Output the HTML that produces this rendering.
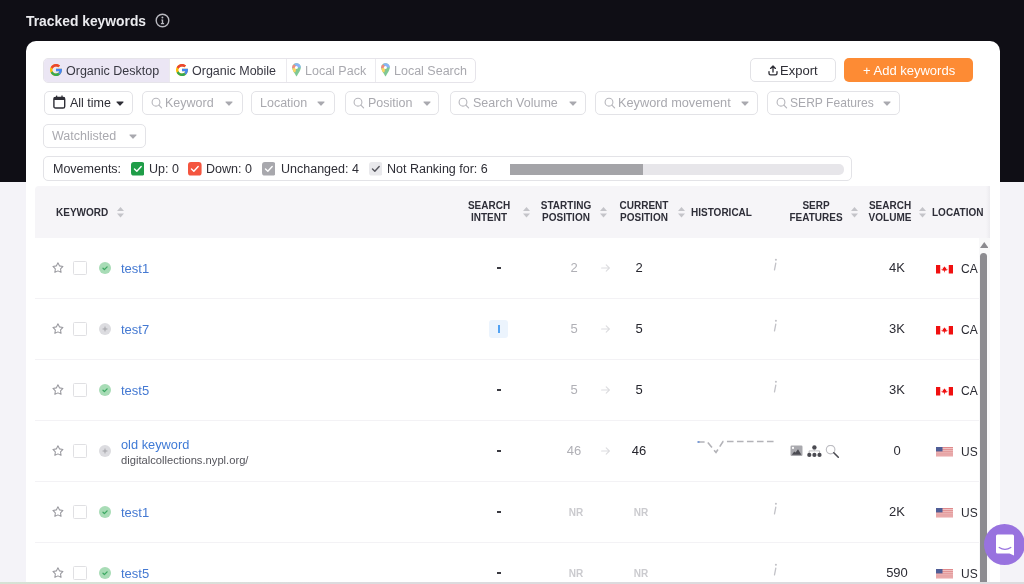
<!DOCTYPE html>
<html><head><meta charset="utf-8">
<style>
*{box-sizing:border-box;margin:0;padding:0}
html,body{width:1024px;height:584px;overflow:hidden}
body{position:relative;background:#f4f3f8;font-family:"Liberation Sans",sans-serif;color:#2b2b35}
.a{position:absolute}
.t{position:absolute;white-space:nowrap;line-height:20px;height:20px;will-change:transform}
</style></head><body>
<div class="a" style="left:0px;top:0px;width:1024px;height:182px;background:#0f0e15"></div>
<div class="a" style="left:26px;top:41px;width:974px;height:560px;background:#fff;border-radius:10px 10px 0 0"></div>
<div class="t " style="left:25.9px;top:10.7px;font-size:13.85px;color:#ebebef;font-weight:bold;">Tracked keywords</div>
<svg class="a" style="left:155px;top:13px" width="15" height="15" viewBox="0 0 15 15"><circle cx="7.5" cy="7.5" r="6.3" fill="none" stroke="#b9b9c0" stroke-width="1.4"/><circle cx="7.4" cy="4.5" r="0.95" fill="#b9b9c0"/><path d="M6.3 6.4h1.9v3.7h0.9v1.1H5.9v-1.1h0.9V7.4h-0.5z" fill="#b9b9c0"/></svg>
<div class="a" style="left:43px;top:58px;width:432.5px;height:24.5px;border:1px solid #e6e4ea;border-radius:5px"></div>
<div class="a" style="left:44px;top:59px;width:124.5px;height:22.5px;background:#ebe6f4;border-radius:4px 0 0 4px"></div>
<div class="a" style="left:168.5px;top:59px;width:1.0px;height:22.5px;background:#ebeaee"></div>
<div class="a" style="left:285.8px;top:59px;width:1.0px;height:22.5px;background:#ebeaee"></div>
<div class="a" style="left:374.8px;top:59px;width:1.0px;height:22.5px;background:#ebeaee"></div>
<svg class="a" style="left:50.2px;top:64px" width="12" height="12" viewBox="4 4 40 40"><path fill="#FBBC05" d="M43.611,20.083H42V20H24v8h11.303c-1.649,4.657-6.08,8-11.303,8c-6.627,0-12-5.373-12-12c0-6.627,5.373-12,12-12c3.059,0,5.842,1.154,7.961,3.039l5.657-5.657C34.046,6.053,29.268,4,24,4C12.955,4,4,12.955,4,24c0,11.045,8.955,20,20,20c11.045,0,20-8.955,20-20C44,22.659,43.862,21.350,43.611,20.083z"/><path fill="#EA4335" d="M6.306,14.691l6.571,4.819C14.655,15.108,18.961,12,24,12c3.059,0,5.842,1.154,7.961,3.039l5.657-5.657C34.046,6.053,29.268,4,24,4C16.318,4,9.656,8.337,6.306,14.691z"/><path fill="#34A853" d="M24,44c5.166,0,9.86-1.977,13.409-5.192l-6.19-5.238C29.211,35.091,26.715,36,24,36c-5.202,0-9.619-3.317-11.283-7.946l-6.522,5.025C9.505,39.556,16.227,44,24,44z"/><path fill="#4285F4" d="M43.611,20.083H42V20H24v8h11.303c-0.792,2.237-2.231,4.166-4.087,5.571l6.19,5.238C36.971,39.205,44,34,44,24C44,22.659,43.862,21.35,43.611,20.083z"/></svg>
<div class="t " style="left:66.2px;top:60.7px;font-size:12.5px;color:#383842;font-weight:normal;">Organic Desktop</div>
<svg class="a" style="left:175.7px;top:64px" width="12" height="12" viewBox="4 4 40 40"><path fill="#FBBC05" d="M43.611,20.083H42V20H24v8h11.303c-1.649,4.657-6.08,8-11.303,8c-6.627,0-12-5.373-12-12c0-6.627,5.373-12,12-12c3.059,0,5.842,1.154,7.961,3.039l5.657-5.657C34.046,6.053,29.268,4,24,4C12.955,4,4,12.955,4,24c0,11.045,8.955,20,20,20c11.045,0,20-8.955,20-20C44,22.659,43.862,21.350,43.611,20.083z"/><path fill="#EA4335" d="M6.306,14.691l6.571,4.819C14.655,15.108,18.961,12,24,12c3.059,0,5.842,1.154,7.961,3.039l5.657-5.657C34.046,6.053,29.268,4,24,4C16.318,4,9.656,8.337,6.306,14.691z"/><path fill="#34A853" d="M24,44c5.166,0,9.86-1.977,13.409-5.192l-6.19-5.238C29.211,35.091,26.715,36,24,36c-5.202,0-9.619-3.317-11.283-7.946l-6.522,5.025C9.505,39.556,16.227,44,24,44z"/><path fill="#4285F4" d="M43.611,20.083H42V20H24v8h11.303c-0.792,2.237-2.231,4.166-4.087,5.571l6.19,5.238C36.971,39.205,44,34,44,24C44,22.659,43.862,21.35,43.611,20.083z"/></svg>
<div class="t " style="left:191.6px;top:60.7px;font-size:12.5px;color:#383842;font-weight:normal;">Organic Mobile</div>
<svg class="a" style="left:292px;top:63px;opacity:.62" width="9" height="14" viewBox="0 0 9 14"><defs><clipPath id="pc1"><path d="M4.5 0.2C2.1 0.2 0.2 2.1 0.2 4.5c0 3 4.3 8.9 4.3 8.9s4.3-5.9 4.3-8.9C8.8 2.1 6.9 0.2 4.5 0.2z"/></clipPath></defs><g clip-path="url(#pc1)"><rect x="0" y="0" width="9" height="14" fill="#34A853"/><polygon points="1.2,0 9,0 9,4.4 5.6,4.4 3,1.9" fill="#4285F4"/><polygon points="0,1.2 3,1.9 4.4,4.4 0,5.6" fill="#EA4335"/><polygon points="0,5.6 4.4,4.4 3.4,9.2 0,9.2" fill="#FBBC04"/></g><circle cx="4.4" cy="4.4" r="1.5" fill="#fff"/></svg>
<div class="t " style="left:305px;top:60.7px;font-size:12.5px;color:#a9a9af;font-weight:normal;">Local Pack</div>
<svg class="a" style="left:381px;top:63px;opacity:.62" width="9" height="14" viewBox="0 0 9 14"><defs><clipPath id="pc2"><path d="M4.5 0.2C2.1 0.2 0.2 2.1 0.2 4.5c0 3 4.3 8.9 4.3 8.9s4.3-5.9 4.3-8.9C8.8 2.1 6.9 0.2 4.5 0.2z"/></clipPath></defs><g clip-path="url(#pc2)"><rect x="0" y="0" width="9" height="14" fill="#34A853"/><polygon points="1.2,0 9,0 9,4.4 5.6,4.4 3,1.9" fill="#4285F4"/><polygon points="0,1.2 3,1.9 4.4,4.4 0,5.6" fill="#EA4335"/><polygon points="0,5.6 4.4,4.4 3.4,9.2 0,9.2" fill="#FBBC04"/></g><circle cx="4.4" cy="4.4" r="1.5" fill="#fff"/></svg>
<div class="t " style="left:393.9px;top:60.7px;font-size:12.5px;color:#a9a9af;font-weight:normal;">Local Search</div>
<div class="a" style="left:750.2px;top:58.3px;width:85.79999999999995px;height:24.10000000000001px;border:1px solid #e2e2e6;border-radius:5px;background:#fff"></div>
<svg class="a" style="left:767.6px;top:65.4px" width="11" height="11" viewBox="0 0 11 11"><path d="M5 7V1M2.6 3.4 5 1 7.4 3.4" fill="none" stroke="#2e2e36" stroke-width="1.35" stroke-linecap="round" stroke-linejoin="round"/><path d="M1 6.6v1.6a1.6 1.6 0 0 0 1.6 1.6h4.8a1.6 1.6 0 0 0 1.6-1.6V6.6" fill="none" stroke="#2e2e36" stroke-width="1.35" stroke-linecap="round"/></svg>
<div class="t " style="left:780.2px;top:60.7px;font-size:13px;color:#2e2e36;font-weight:normal;">Export</div>
<div class="a" style="left:843.9px;top:58.3px;width:128.89999999999998px;height:24.0px;background:#fd8b34;border-radius:5px"></div>
<div class="t " style="left:862.8px;top:61.099999999999994px;font-size:13px;color:#ffffff;font-weight:normal;">+ Add keywords</div>
<div class="a" style="left:43.7px;top:91px;width:88.99999999999999px;height:23.700000000000003px;border:1px solid #e3e3e7;border-radius:5px"></div>
<svg class="a" style="left:52.8px;top:95px" width="13" height="14" viewBox="0 0 13 14"><rect x="0.9" y="2.4" width="10.8" height="10.6" rx="1.6" fill="none" stroke="#2e2e36" stroke-width="1.4"/><rect x="0.9" y="2.4" width="10.8" height="2.6" fill="#2e2e36"/><line x1="3.6" y1="0.6" x2="3.6" y2="3" stroke="#2e2e36" stroke-width="1.3"/><line x1="9" y1="0.6" x2="9" y2="3" stroke="#2e2e36" stroke-width="1.3"/></svg>
<div class="t " style="left:70.4px;top:93.3px;font-size:12.5px;color:#2e2e36;font-weight:normal;">All time</div>
<svg class="a" style="left:115.89999999999999px;top:101.3px" width="8" height="5" viewBox="0 0 8 5"><path d="M0.9 0.4h6.2a0.5 0.5 0 0 1 0.4 0.8L4.4 4.6a0.5 0.5 0 0 1-0.8 0L0.5 1.2a0.5 0.5 0 0 1 0.4-0.8z" fill="#2e2e36"/></svg>
<div class="a" style="left:141.5px;top:91px;width:101.1px;height:23.700000000000003px;border:1px solid #e3e3e7;border-radius:5px"></div>
<svg class="a" style="left:150.7px;top:97px" width="12" height="12" viewBox="0 0 12 12"><circle cx="5" cy="5.2" r="3.9" fill="none" stroke="#b6b6bc" stroke-width="1.1"/><line x1="7.9" y1="8.1" x2="10.6" y2="10.8" stroke="#b6b6bc" stroke-width="1.2" stroke-linecap="round"/></svg>
<div class="t " style="left:165.1px;top:93.3px;font-size:12.5px;color:#a9a9af;font-weight:normal;">Keyword</div>
<svg class="a" style="left:225.2px;top:101.3px" width="8" height="5" viewBox="0 0 8 5"><path d="M0.9 0.4h6.2a0.5 0.5 0 0 1 0.4 0.8L4.4 4.6a0.5 0.5 0 0 1-0.8 0L0.5 1.2a0.5 0.5 0 0 1 0.4-0.8z" fill="#a9a9af"/></svg>
<div class="a" style="left:251.2px;top:91px;width:83.60000000000002px;height:23.700000000000003px;border:1px solid #e3e3e7;border-radius:5px"></div>
<div class="t " style="left:260px;top:93.3px;font-size:12.5px;color:#a9a9af;font-weight:normal;">Location</div>
<svg class="a" style="left:317.40000000000003px;top:101.3px" width="8" height="5" viewBox="0 0 8 5"><path d="M0.9 0.4h6.2a0.5 0.5 0 0 1 0.4 0.8L4.4 4.6a0.5 0.5 0 0 1-0.8 0L0.5 1.2a0.5 0.5 0 0 1 0.4-0.8z" fill="#a9a9af"/></svg>
<div class="a" style="left:344.5px;top:91px;width:94.89999999999998px;height:23.700000000000003px;border:1px solid #e3e3e7;border-radius:5px"></div>
<svg class="a" style="left:353.3px;top:97px" width="12" height="12" viewBox="0 0 12 12"><circle cx="5" cy="5.2" r="3.9" fill="none" stroke="#b6b6bc" stroke-width="1.1"/><line x1="7.9" y1="8.1" x2="10.6" y2="10.8" stroke="#b6b6bc" stroke-width="1.2" stroke-linecap="round"/></svg>
<div class="t " style="left:367.6px;top:93.3px;font-size:12.5px;color:#a9a9af;font-weight:normal;">Position</div>
<svg class="a" style="left:423.0px;top:101.3px" width="8" height="5" viewBox="0 0 8 5"><path d="M0.9 0.4h6.2a0.5 0.5 0 0 1 0.4 0.8L4.4 4.6a0.5 0.5 0 0 1-0.8 0L0.5 1.2a0.5 0.5 0 0 1 0.4-0.8z" fill="#a9a9af"/></svg>
<div class="a" style="left:449.7px;top:91px;width:135.90000000000003px;height:23.700000000000003px;border:1px solid #e3e3e7;border-radius:5px"></div>
<svg class="a" style="left:458px;top:97px" width="12" height="12" viewBox="0 0 12 12"><circle cx="5" cy="5.2" r="3.9" fill="none" stroke="#b6b6bc" stroke-width="1.1"/><line x1="7.9" y1="8.1" x2="10.6" y2="10.8" stroke="#b6b6bc" stroke-width="1.2" stroke-linecap="round"/></svg>
<div class="t " style="left:472.6px;top:93.3px;font-size:12.5px;color:#a9a9af;font-weight:normal;">Search Volume</div>
<svg class="a" style="left:569.0px;top:101.3px" width="8" height="5" viewBox="0 0 8 5"><path d="M0.9 0.4h6.2a0.5 0.5 0 0 1 0.4 0.8L4.4 4.6a0.5 0.5 0 0 1-0.8 0L0.5 1.2a0.5 0.5 0 0 1 0.4-0.8z" fill="#a9a9af"/></svg>
<div class="a" style="left:595px;top:91px;width:162.5px;height:23.700000000000003px;border:1px solid #e3e3e7;border-radius:5px"></div>
<svg class="a" style="left:603.7px;top:97px" width="12" height="12" viewBox="0 0 12 12"><circle cx="5" cy="5.2" r="3.9" fill="none" stroke="#b6b6bc" stroke-width="1.1"/><line x1="7.9" y1="8.1" x2="10.6" y2="10.8" stroke="#b6b6bc" stroke-width="1.2" stroke-linecap="round"/></svg>
<div class="t " style="left:618px;top:93.3px;font-size:12.75px;color:#a9a9af;font-weight:normal;">Keyword movement</div>
<svg class="a" style="left:740.6px;top:101.3px" width="8" height="5" viewBox="0 0 8 5"><path d="M0.9 0.4h6.2a0.5 0.5 0 0 1 0.4 0.8L4.4 4.6a0.5 0.5 0 0 1-0.8 0L0.5 1.2a0.5 0.5 0 0 1 0.4-0.8z" fill="#a9a9af"/></svg>
<div class="a" style="left:767.3px;top:91px;width:132.80000000000007px;height:23.700000000000003px;border:1px solid #e3e3e7;border-radius:5px"></div>
<svg class="a" style="left:775.5px;top:97px" width="12" height="12" viewBox="0 0 12 12"><circle cx="5" cy="5.2" r="3.9" fill="none" stroke="#b6b6bc" stroke-width="1.1"/><line x1="7.9" y1="8.1" x2="10.6" y2="10.8" stroke="#b6b6bc" stroke-width="1.2" stroke-linecap="round"/></svg>
<div class="t " style="left:790.3px;top:93.3px;font-size:12.1px;color:#a9a9af;font-weight:normal;">SERP Features</div>
<svg class="a" style="left:883.3000000000001px;top:101.3px" width="8" height="5" viewBox="0 0 8 5"><path d="M0.9 0.4h6.2a0.5 0.5 0 0 1 0.4 0.8L4.4 4.6a0.5 0.5 0 0 1-0.8 0L0.5 1.2a0.5 0.5 0 0 1 0.4-0.8z" fill="#a9a9af"/></svg>
<div class="a" style="left:43.1px;top:124.1px;width:102.5px;height:23.599999999999994px;border:1px solid #e3e3e7;border-radius:5px"></div>
<div class="t " style="left:52.3px;top:125.9px;font-size:12.5px;color:#a9a9af;font-weight:normal;">Watchlisted</div>
<svg class="a" style="left:128.79999999999998px;top:133.9px" width="8" height="5" viewBox="0 0 8 5"><path d="M0.9 0.4h6.2a0.5 0.5 0 0 1 0.4 0.8L4.4 4.6a0.5 0.5 0 0 1-0.8 0L0.5 1.2a0.5 0.5 0 0 1 0.4-0.8z" fill="#a9a9af"/></svg>
<div class="a" style="left:43.1px;top:156.3px;width:808.5px;height:24.69999999999999px;border:1px solid #e3e3e7;border-radius:5px"></div>
<div class="t " style="left:52.9px;top:159.1px;font-size:12.5px;color:#2e2e36;font-weight:normal;">Movements:</div>
<svg class="a" style="left:130.9px;top:162px" width="13.6" height="13.6" viewBox="0 0 14 14"><rect x="0" y="0" width="14" height="14" rx="3" fill="#1f9d48"/><path d="M3.6 7.3 6 9.5 10.5 4.7" fill="none" stroke="#fff" stroke-width="1.45" stroke-linecap="round" stroke-linejoin="round"/></svg>
<div class="t " style="left:148.9px;top:159.1px;font-size:12.5px;color:#2e2e36;font-weight:normal;">Up: 0</div>
<svg class="a" style="left:188px;top:162px" width="13.6" height="13.6" viewBox="0 0 14 14"><rect x="0" y="0" width="14" height="14" rx="3" fill="#f4553f"/><path d="M3.6 7.3 6 9.5 10.5 4.7" fill="none" stroke="#fff" stroke-width="1.45" stroke-linecap="round" stroke-linejoin="round"/></svg>
<div class="t " style="left:206.4px;top:159.1px;font-size:12.5px;color:#2e2e36;font-weight:normal;">Down: 0</div>
<svg class="a" style="left:261.5px;top:162px" width="13.6" height="13.6" viewBox="0 0 14 14"><rect x="0" y="0" width="14" height="14" rx="3" fill="#a8a8ad"/><path d="M3.6 7.3 6 9.5 10.5 4.7" fill="none" stroke="#fff" stroke-width="1.45" stroke-linecap="round" stroke-linejoin="round"/></svg>
<div class="t " style="left:280.5px;top:159.1px;font-size:12.5px;color:#2e2e36;font-weight:normal;">Unchanged: 4</div>
<svg class="a" style="left:368.9px;top:162px" width="13.6" height="13.6" viewBox="0 0 14 14"><rect x="0" y="0" width="14" height="14" rx="3" fill="#e9e9ec"/><path d="M3.6 7.3 6 9.5 10.5 4.7" fill="none" stroke="#55555c" stroke-width="1.45" stroke-linecap="round" stroke-linejoin="round"/></svg>
<div class="t " style="left:386.8px;top:159.1px;font-size:12.5px;color:#2e2e36;font-weight:normal;">Not Ranking for: 6</div>
<div class="a" style="left:509.8px;top:164px;width:334.09999999999997px;height:10.599999999999994px;background:#e7e6ea;border-radius:0 5px 5px 0"></div>
<div class="a" style="left:509.8px;top:164px;width:133.7px;height:10.599999999999994px;background:#a4a4a8"></div>
<div class="a" style="left:35px;top:186px;width:955px;height:52px;background:#f6f5f8;border-radius:4px 0 0 0"></div>
<div class="a" style="left:986px;top:186px;width:4px;height:52px;background:linear-gradient(to right,#f6f5f8,#ecebef)"></div>
<div class="t " style="left:56.2px;top:202.5px;font-size:10px;color:#2e2e38;font-weight:bold;">KEYWORD</div>
<svg class="a" style="left:117.2px;top:207.0px" width="7" height="11" viewBox="0 0 7 11"><polygon points="3.5,0 7,4 0,4" fill="#c4c4c9"/><polygon points="0,6.5 7,6.5 3.5,10.5" fill="#c4c4c9"/></svg>
<div class="t" style="left:388.5px;width:200px;text-align:center;top:196.1px;font-size:10px;color:#2e2e38;font-weight:bold;">SEARCH</div>
<div class="t" style="left:388.5px;width:200px;text-align:center;top:208.1px;font-size:10px;color:#2e2e38;font-weight:bold;">INTENT</div>
<svg class="a" style="left:523px;top:207.0px" width="7" height="11" viewBox="0 0 7 11"><polygon points="3.5,0 7,4 0,4" fill="#c4c4c9"/><polygon points="0,6.5 7,6.5 3.5,10.5" fill="#c4c4c9"/></svg>
<div class="t" style="left:466.29999999999995px;width:200px;text-align:center;top:196.1px;font-size:10px;color:#2e2e38;font-weight:bold;">STARTING</div>
<div class="t" style="left:466.29999999999995px;width:200px;text-align:center;top:208.1px;font-size:10px;color:#2e2e38;font-weight:bold;">POSITION</div>
<svg class="a" style="left:600.3px;top:207.0px" width="7" height="11" viewBox="0 0 7 11"><polygon points="3.5,0 7,4 0,4" fill="#c4c4c9"/><polygon points="0,6.5 7,6.5 3.5,10.5" fill="#c4c4c9"/></svg>
<div class="t" style="left:543.8px;width:200px;text-align:center;top:196.1px;font-size:10px;color:#2e2e38;font-weight:bold;">CURRENT</div>
<div class="t" style="left:543.8px;width:200px;text-align:center;top:208.1px;font-size:10px;color:#2e2e38;font-weight:bold;">POSITION</div>
<svg class="a" style="left:678px;top:207.0px" width="7" height="11" viewBox="0 0 7 11"><polygon points="3.5,0 7,4 0,4" fill="#c4c4c9"/><polygon points="0,6.5 7,6.5 3.5,10.5" fill="#c4c4c9"/></svg>
<div class="t " style="left:690.5px;top:202.5px;font-size:10px;color:#2e2e38;font-weight:bold;">HISTORICAL</div>
<div class="t" style="left:716px;width:200px;text-align:center;top:196.1px;font-size:10px;color:#2e2e38;font-weight:bold;">SERP</div>
<div class="t" style="left:716px;width:200px;text-align:center;top:208.1px;font-size:10px;color:#2e2e38;font-weight:bold;">FEATURES</div>
<svg class="a" style="left:850.5px;top:207.0px" width="7" height="11" viewBox="0 0 7 11"><polygon points="3.5,0 7,4 0,4" fill="#c4c4c9"/><polygon points="0,6.5 7,6.5 3.5,10.5" fill="#c4c4c9"/></svg>
<div class="t" style="left:789.5px;width:200px;text-align:center;top:196.1px;font-size:10px;color:#2e2e38;font-weight:bold;">SEARCH</div>
<div class="t" style="left:789.5px;width:200px;text-align:center;top:208.1px;font-size:10px;color:#2e2e38;font-weight:bold;">VOLUME</div>
<svg class="a" style="left:918.6px;top:207.0px" width="7" height="11" viewBox="0 0 7 11"><polygon points="3.5,0 7,4 0,4" fill="#c4c4c9"/><polygon points="0,6.5 7,6.5 3.5,10.5" fill="#c4c4c9"/></svg>
<div class="t " style="left:931.7px;top:202.5px;font-size:10px;color:#2e2e38;font-weight:bold;">LOCATION</div>
<div class="a" style="left:35px;top:298px;width:944px;height:1px;background:#f3f2f5"></div>
<svg class="a" style="left:51.5px;top:262px" width="12" height="12" viewBox="0 0 12 12"><path d="M5.95 0.85 L7.57 3.88 L10.94 4.48 L8.57 6.95 L9.04 10.35 L5.95 8.85 L2.86 10.35 L3.33 6.95 L0.96 4.48 L4.33 3.88z" fill="none" stroke="#98989e" stroke-width="1.05" stroke-linejoin="round"/></svg>
<div class="a" style="left:73px;top:261px;width:14px;height:14px;border:1px solid #e0e0e3;border-radius:1.5px"></div>
<svg class="a" style="left:99.4px;top:262px" width="12" height="12" viewBox="0 0 12 12"><circle cx="6" cy="6" r="6" fill="#a8dcb6"/><path d="M4 6.3 5.4 7.6 8.1 4.9" fill="none" stroke="#3da862" stroke-width="1.3" stroke-linecap="round" stroke-linejoin="round"/></svg>
<div class="t " style="left:121.3px;top:258.5px;font-size:13px;color:#4479d2;font-weight:normal;">test1</div>
<div class="a" style="left:496.8px;top:267.45px;width:3.8999999999999773px;height:1.400000000000034px;background:#3a3a41"></div>
<div class="t" style="left:474.20000000000005px;width:200px;text-align:center;top:258.1px;font-size:13px;color:#b0b0b6;font-weight:normal;">2</div>
<svg class="a" style="left:601.3px;top:264px" width="10" height="8" viewBox="0 0 10 8"><path d="M0.6 4h7.8M5.2 0.9 8.4 4 5.2 7.1" fill="none" stroke="#dcdcdf" stroke-width="1.1" stroke-linecap="round" stroke-linejoin="round"/></svg>
<div class="t" style="left:538.6px;width:200px;text-align:center;top:258.1px;font-size:13px;color:#26262e;font-weight:normal;">2</div>
<svg class="a" style="left:770px;top:256px" width="10" height="16" viewBox="0 0 10 16"><circle cx="5.9" cy="3.7" r="1.05" fill="#c2c2c7"/><line x1="5.8" y1="7.2" x2="4.5" y2="13.8" stroke="#c2c2c7" stroke-width="1.3" stroke-linecap="round"/></svg>
<div class="t" style="left:797.3px;width:200px;text-align:center;top:258.4px;font-size:13px;color:#2b2b33;font-weight:normal;">4K</div>
<svg class="a" style="left:935.8px;top:265px" width="17" height="8.5" viewBox="0 0 34 17"><rect width="34" height="17" fill="#fff"/><rect width="8.5" height="17" fill="#f01010"/><rect x="25.5" width="8.5" height="17" fill="#f01010"/><path d="M17 2.5 18.6 5.5 20.6 4.8 20 8.8 23.2 7.6 22.2 10.6 17.7 11.4V14.5h-1.4v-3.1L11.8 10.6 10.8 7.6 14 8.8 13.4 4.8 15.4 5.5z" fill="#f01010"/></svg>
<div class="t " style="left:960.5px;top:258.6px;font-size:12px;color:#2b2b33;font-weight:normal;">CA</div>
<div class="a" style="left:35px;top:359px;width:944px;height:1px;background:#f3f2f5"></div>
<svg class="a" style="left:51.5px;top:323px" width="12" height="12" viewBox="0 0 12 12"><path d="M5.95 0.85 L7.57 3.88 L10.94 4.48 L8.57 6.95 L9.04 10.35 L5.95 8.85 L2.86 10.35 L3.33 6.95 L0.96 4.48 L4.33 3.88z" fill="none" stroke="#98989e" stroke-width="1.05" stroke-linejoin="round"/></svg>
<div class="a" style="left:73px;top:322px;width:14px;height:14px;border:1px solid #e0e0e3;border-radius:1.5px"></div>
<svg class="a" style="left:99.4px;top:323px" width="12" height="12" viewBox="0 0 12 12"><circle cx="6" cy="6" r="6" fill="#dcdce0"/><path d="M6 3.6v4.8M3.6 6h4.8" stroke="#a3a3a8" stroke-width="1"/></svg>
<div class="t " style="left:121.3px;top:319.5px;font-size:13px;color:#4479d2;font-weight:normal;">test7</div>
<div class="a" style="left:489.2px;top:319.5px;width:18.80000000000001px;height:18.899999999999977px;background:#ecf4fd;border-radius:3px"></div>
<div class="a" style="left:497.8px;top:325.3px;width:2.0px;height:7.300000000000011px;background:#52a2f3"></div>
<div class="t" style="left:474.20000000000005px;width:200px;text-align:center;top:319.1px;font-size:13px;color:#b0b0b6;font-weight:normal;">5</div>
<svg class="a" style="left:601.3px;top:325px" width="10" height="8" viewBox="0 0 10 8"><path d="M0.6 4h7.8M5.2 0.9 8.4 4 5.2 7.1" fill="none" stroke="#dcdcdf" stroke-width="1.1" stroke-linecap="round" stroke-linejoin="round"/></svg>
<div class="t" style="left:538.6px;width:200px;text-align:center;top:319.1px;font-size:13px;color:#26262e;font-weight:normal;">5</div>
<svg class="a" style="left:770px;top:317px" width="10" height="16" viewBox="0 0 10 16"><circle cx="5.9" cy="3.7" r="1.05" fill="#c2c2c7"/><line x1="5.8" y1="7.2" x2="4.5" y2="13.8" stroke="#c2c2c7" stroke-width="1.3" stroke-linecap="round"/></svg>
<div class="t" style="left:797.3px;width:200px;text-align:center;top:319.4px;font-size:13px;color:#2b2b33;font-weight:normal;">3K</div>
<svg class="a" style="left:935.8px;top:326px" width="17" height="8.5" viewBox="0 0 34 17"><rect width="34" height="17" fill="#fff"/><rect width="8.5" height="17" fill="#f01010"/><rect x="25.5" width="8.5" height="17" fill="#f01010"/><path d="M17 2.5 18.6 5.5 20.6 4.8 20 8.8 23.2 7.6 22.2 10.6 17.7 11.4V14.5h-1.4v-3.1L11.8 10.6 10.8 7.6 14 8.8 13.4 4.8 15.4 5.5z" fill="#f01010"/></svg>
<div class="t " style="left:960.5px;top:319.6px;font-size:12px;color:#2b2b33;font-weight:normal;">CA</div>
<div class="a" style="left:35px;top:420px;width:944px;height:1px;background:#f3f2f5"></div>
<svg class="a" style="left:51.5px;top:384px" width="12" height="12" viewBox="0 0 12 12"><path d="M5.95 0.85 L7.57 3.88 L10.94 4.48 L8.57 6.95 L9.04 10.35 L5.95 8.85 L2.86 10.35 L3.33 6.95 L0.96 4.48 L4.33 3.88z" fill="none" stroke="#98989e" stroke-width="1.05" stroke-linejoin="round"/></svg>
<div class="a" style="left:73px;top:383px;width:14px;height:14px;border:1px solid #e0e0e3;border-radius:1.5px"></div>
<svg class="a" style="left:99.4px;top:384px" width="12" height="12" viewBox="0 0 12 12"><circle cx="6" cy="6" r="6" fill="#a8dcb6"/><path d="M4 6.3 5.4 7.6 8.1 4.9" fill="none" stroke="#3da862" stroke-width="1.3" stroke-linecap="round" stroke-linejoin="round"/></svg>
<div class="t " style="left:121.3px;top:380.5px;font-size:13px;color:#4479d2;font-weight:normal;">test5</div>
<div class="a" style="left:496.8px;top:389.45px;width:3.8999999999999773px;height:1.400000000000034px;background:#3a3a41"></div>
<div class="t" style="left:474.20000000000005px;width:200px;text-align:center;top:380.1px;font-size:13px;color:#b0b0b6;font-weight:normal;">5</div>
<svg class="a" style="left:601.3px;top:386px" width="10" height="8" viewBox="0 0 10 8"><path d="M0.6 4h7.8M5.2 0.9 8.4 4 5.2 7.1" fill="none" stroke="#dcdcdf" stroke-width="1.1" stroke-linecap="round" stroke-linejoin="round"/></svg>
<div class="t" style="left:538.6px;width:200px;text-align:center;top:380.1px;font-size:13px;color:#26262e;font-weight:normal;">5</div>
<svg class="a" style="left:770px;top:378px" width="10" height="16" viewBox="0 0 10 16"><circle cx="5.9" cy="3.7" r="1.05" fill="#c2c2c7"/><line x1="5.8" y1="7.2" x2="4.5" y2="13.8" stroke="#c2c2c7" stroke-width="1.3" stroke-linecap="round"/></svg>
<div class="t" style="left:797.3px;width:200px;text-align:center;top:380.4px;font-size:13px;color:#2b2b33;font-weight:normal;">3K</div>
<svg class="a" style="left:935.8px;top:387px" width="17" height="8.5" viewBox="0 0 34 17"><rect width="34" height="17" fill="#fff"/><rect width="8.5" height="17" fill="#f01010"/><rect x="25.5" width="8.5" height="17" fill="#f01010"/><path d="M17 2.5 18.6 5.5 20.6 4.8 20 8.8 23.2 7.6 22.2 10.6 17.7 11.4V14.5h-1.4v-3.1L11.8 10.6 10.8 7.6 14 8.8 13.4 4.8 15.4 5.5z" fill="#f01010"/></svg>
<div class="t " style="left:960.5px;top:380.6px;font-size:12px;color:#2b2b33;font-weight:normal;">CA</div>
<div class="a" style="left:35px;top:481px;width:944px;height:1px;background:#f3f2f5"></div>
<svg class="a" style="left:51.5px;top:445px" width="12" height="12" viewBox="0 0 12 12"><path d="M5.95 0.85 L7.57 3.88 L10.94 4.48 L8.57 6.95 L9.04 10.35 L5.95 8.85 L2.86 10.35 L3.33 6.95 L0.96 4.48 L4.33 3.88z" fill="none" stroke="#98989e" stroke-width="1.05" stroke-linejoin="round"/></svg>
<div class="a" style="left:73px;top:444px;width:14px;height:14px;border:1px solid #e0e0e3;border-radius:1.5px"></div>
<svg class="a" style="left:99.4px;top:445px" width="12" height="12" viewBox="0 0 12 12"><circle cx="6" cy="6" r="6" fill="#dcdce0"/><path d="M6 3.6v4.8M3.6 6h4.8" stroke="#a3a3a8" stroke-width="1"/></svg>
<div class="t " style="left:121.2px;top:434.8px;font-size:12.8px;color:#3f7ad6;font-weight:normal;">old keyword</div>
<div class="t " style="left:121.4px;top:450px;font-size:11.2px;color:#55555c;font-weight:normal;">digitalcollections.nypl.org/</div>
<div class="a" style="left:496.8px;top:450.45px;width:3.8999999999999773px;height:1.400000000000034px;background:#3a3a41"></div>
<div class="t" style="left:474.20000000000005px;width:200px;text-align:center;top:441.1px;font-size:13px;color:#b0b0b6;font-weight:normal;">46</div>
<svg class="a" style="left:601.3px;top:447px" width="10" height="8" viewBox="0 0 10 8"><path d="M0.6 4h7.8M5.2 0.9 8.4 4 5.2 7.1" fill="none" stroke="#dcdcdf" stroke-width="1.1" stroke-linecap="round" stroke-linejoin="round"/></svg>
<div class="t" style="left:538.6px;width:200px;text-align:center;top:441.1px;font-size:13px;color:#26262e;font-weight:normal;">46</div>
<svg class="a" style="left:696px;top:440px" width="82" height="15" viewBox="0 0 82 15"><path d="M2 2 L11.5 2 L20 12.5 L27 1.5 L79 1.5" fill="none" stroke="#b3b3b8" stroke-width="1.6" stroke-dasharray="6.6 3.4"/><rect x="1.5" y="1" width="2" height="2" fill="#7b9bd6"/></svg>
<svg class="a" style="left:789.5px;top:444.5px" width="50" height="14" viewBox="0 0 50 14"><rect x="0.5" y="0.5" width="12" height="10.5" rx="1.2" fill="#a9a9ae"/><circle cx="3" cy="2.9" r="1.1" fill="#fff"/><path d="M1.8 9.8 4.2 6.6 5.6 7.6 8 4.2 11.4 9.8z" fill="#4b4b52"/><circle cx="24.4" cy="2.5" r="2.2" fill="#4b4b52"/><path d="M19.1 8.5V5.9h10.5v2.6M24.4 4.2v1.7" fill="none" stroke="#a6a6ab" stroke-width="0.7"/><circle cx="19.3" cy="9.9" r="2.1" fill="#4b4b52"/><circle cx="24.4" cy="9.9" r="2.1" fill="#4b4b52"/><circle cx="29.5" cy="9.9" r="2.1" fill="#4b4b52"/><circle cx="40.6" cy="4.6" r="4.3" fill="none" stroke="#bdbdc2" stroke-width="1.15"/><line x1="43.8" y1="7.8" x2="48.3" y2="12.2" stroke="#4b4b52" stroke-width="1.6" stroke-linecap="round"/></svg>
<div class="t" style="left:797.3px;width:200px;text-align:center;top:441.4px;font-size:13px;color:#2b2b33;font-weight:normal;">0</div>
<svg class="a" style="left:935.8px;top:447.4px" width="17" height="9.3" viewBox="0 0 34 18.6"><rect width="34" height="18.6" fill="#f2c9c9"/><g fill="#df8a8c"><rect y="0" width="34" height="2.2"/><rect y="4.3" width="34" height="2.2"/><rect y="8.6" width="34" height="2.2"/><rect y="12.9" width="34" height="2.2"/><rect y="17" width="34" height="1.6"/></g><rect width="13" height="8.8" fill="#4f5d96"/></svg>
<div class="t " style="left:960.5px;top:441.6px;font-size:12px;color:#2b2b33;font-weight:normal;">US</div>
<div class="a" style="left:35px;top:542px;width:944px;height:1px;background:#f3f2f5"></div>
<svg class="a" style="left:51.5px;top:506px" width="12" height="12" viewBox="0 0 12 12"><path d="M5.95 0.85 L7.57 3.88 L10.94 4.48 L8.57 6.95 L9.04 10.35 L5.95 8.85 L2.86 10.35 L3.33 6.95 L0.96 4.48 L4.33 3.88z" fill="none" stroke="#98989e" stroke-width="1.05" stroke-linejoin="round"/></svg>
<div class="a" style="left:73px;top:505px;width:14px;height:14px;border:1px solid #e0e0e3;border-radius:1.5px"></div>
<svg class="a" style="left:99.4px;top:506px" width="12" height="12" viewBox="0 0 12 12"><circle cx="6" cy="6" r="6" fill="#a8dcb6"/><path d="M4 6.3 5.4 7.6 8.1 4.9" fill="none" stroke="#3da862" stroke-width="1.3" stroke-linecap="round" stroke-linejoin="round"/></svg>
<div class="t " style="left:121.3px;top:502.5px;font-size:13px;color:#4479d2;font-weight:normal;">test1</div>
<div class="a" style="left:496.8px;top:511.45px;width:3.8999999999999773px;height:1.400000000000034px;background:#3a3a41"></div>
<div class="t" style="left:476.29999999999995px;width:200px;text-align:center;top:503.0px;font-size:10px;color:#cbcbcf;font-weight:bold;">NR</div>
<div class="t" style="left:540.8px;width:200px;text-align:center;top:502.5px;font-size:10px;color:#cbcbcf;font-weight:bold;">NR</div>
<svg class="a" style="left:770px;top:500px" width="10" height="16" viewBox="0 0 10 16"><circle cx="5.9" cy="3.7" r="1.05" fill="#c2c2c7"/><line x1="5.8" y1="7.2" x2="4.5" y2="13.8" stroke="#c2c2c7" stroke-width="1.3" stroke-linecap="round"/></svg>
<div class="t" style="left:797.3px;width:200px;text-align:center;top:502.4px;font-size:13px;color:#2b2b33;font-weight:normal;">2K</div>
<svg class="a" style="left:935.8px;top:508.4px" width="17" height="9.3" viewBox="0 0 34 18.6"><rect width="34" height="18.6" fill="#f2c9c9"/><g fill="#df8a8c"><rect y="0" width="34" height="2.2"/><rect y="4.3" width="34" height="2.2"/><rect y="8.6" width="34" height="2.2"/><rect y="12.9" width="34" height="2.2"/><rect y="17" width="34" height="1.6"/></g><rect width="13" height="8.8" fill="#4f5d96"/></svg>
<div class="t " style="left:960.5px;top:502.6px;font-size:12px;color:#2b2b33;font-weight:normal;">US</div>
<svg class="a" style="left:51.5px;top:567px" width="12" height="12" viewBox="0 0 12 12"><path d="M5.95 0.85 L7.57 3.88 L10.94 4.48 L8.57 6.95 L9.04 10.35 L5.95 8.85 L2.86 10.35 L3.33 6.95 L0.96 4.48 L4.33 3.88z" fill="none" stroke="#98989e" stroke-width="1.05" stroke-linejoin="round"/></svg>
<div class="a" style="left:73px;top:566px;width:14px;height:14px;border:1px solid #e0e0e3;border-radius:1.5px"></div>
<svg class="a" style="left:99.4px;top:567px" width="12" height="12" viewBox="0 0 12 12"><circle cx="6" cy="6" r="6" fill="#a8dcb6"/><path d="M4 6.3 5.4 7.6 8.1 4.9" fill="none" stroke="#3da862" stroke-width="1.3" stroke-linecap="round" stroke-linejoin="round"/></svg>
<div class="t " style="left:121.3px;top:563.5px;font-size:13px;color:#4479d2;font-weight:normal;">test5</div>
<div class="a" style="left:496.8px;top:572.45px;width:3.8999999999999773px;height:1.3999999999999773px;background:#3a3a41"></div>
<div class="t" style="left:476.29999999999995px;width:200px;text-align:center;top:564.0px;font-size:10px;color:#cbcbcf;font-weight:bold;">NR</div>
<div class="t" style="left:540.8px;width:200px;text-align:center;top:563.5px;font-size:10px;color:#cbcbcf;font-weight:bold;">NR</div>
<svg class="a" style="left:770px;top:561px" width="10" height="16" viewBox="0 0 10 16"><circle cx="5.9" cy="3.7" r="1.05" fill="#c2c2c7"/><line x1="5.8" y1="7.2" x2="4.5" y2="13.8" stroke="#c2c2c7" stroke-width="1.3" stroke-linecap="round"/></svg>
<div class="t" style="left:797.3px;width:200px;text-align:center;top:563.4px;font-size:13px;color:#2b2b33;font-weight:normal;">590</div>
<svg class="a" style="left:935.8px;top:569.4px" width="17" height="9.3" viewBox="0 0 34 18.6"><rect width="34" height="18.6" fill="#f2c9c9"/><g fill="#df8a8c"><rect y="0" width="34" height="2.2"/><rect y="4.3" width="34" height="2.2"/><rect y="8.6" width="34" height="2.2"/><rect y="12.9" width="34" height="2.2"/><rect y="17" width="34" height="1.6"/></g><rect width="13" height="8.8" fill="#4f5d96"/></svg>
<div class="t " style="left:960.5px;top:563.6px;font-size:12px;color:#2b2b33;font-weight:normal;">US</div>
<div class="a" style="left:978.5px;top:238px;width:11.5px;height:346px;background:#f8f8f9"></div>
<svg class="a" style="left:979.5px;top:241.8px" width="8.5" height="6" viewBox="0 0 8.5 6"><polygon points="4.25,0 8.5,6 0,6" fill="#8a898e"/></svg>
<div class="a" style="left:980px;top:253px;width:7.2000000000000455px;height:347px;background:#8b8a8f;border-radius:3.6px"></div>
<div class="a" style="left:0px;top:582px;width:1024px;height:2px;background:linear-gradient(to right,#d6e2d5 0,#d9e0d8 180px,#dcdbde 320px)"></div>
<svg class="a" style="left:984px;top:524px" width="41" height="41" viewBox="0 0 41 41"><circle cx="20.5" cy="20.5" r="20.5" fill="#9872df"/><path d="M13.5 10.5h15a1.5 1.5 0 0 1 1.5 1.5v19.5l-4.5-2H13.5A1.5 1.5 0 0 1 12 28V12a1.5 1.5 0 0 1 1.5-1.5z" fill="#fff"/><path d="M15.2 23.5q5.8 3.6 11.6 0" fill="none" stroke="#9872df" stroke-width="1.3" stroke-linecap="round"/></svg>
</body></html>
